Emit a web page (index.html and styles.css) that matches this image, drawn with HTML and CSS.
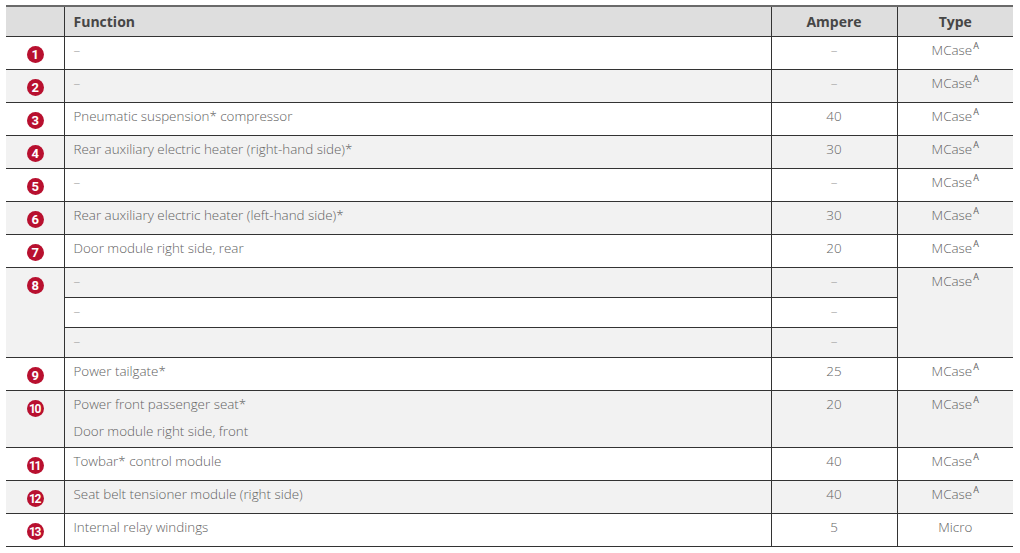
FILE: index.html
```html
<!DOCTYPE html>
<html>
<head>
<meta charset="utf-8">
<link rel="stylesheet" href="styles.css">
</head>
<body>
<table class="fuse">
  <colgroup>
    <col class="c-num"><col class="c-fn"><col class="c-amp"><col class="c-type">
  </colgroup>
  <thead>
    <tr><th></th><th class="l">Function</th><th>Ampere</th><th>Type</th></tr>
  </thead>
  <tbody>
    <tr class="w"><td class="num"><span class="b">1</span></td><td class="fn dash">–</td><td class="amp dash">–</td><td class="type">MCase<sup>A</sup></td></tr>
    <tr class="g"><td class="num"><span class="b">2</span></td><td class="fn dash">–</td><td class="amp dash">–</td><td class="type">MCase<sup>A</sup></td></tr>
    <tr class="w"><td class="num"><span class="b">3</span></td><td class="fn">Pneumatic suspension* compressor</td><td class="amp">40</td><td class="type">MCase<sup>A</sup></td></tr>
    <tr class="g"><td class="num"><span class="b">4</span></td><td class="fn">Rear auxiliary electric heater (right-hand side)*</td><td class="amp">30</td><td class="type">MCase<sup>A</sup></td></tr>
    <tr class="w"><td class="num"><span class="b">5</span></td><td class="fn dash">–</td><td class="amp dash">–</td><td class="type">MCase<sup>A</sup></td></tr>
    <tr class="g"><td class="num"><span class="b">6</span></td><td class="fn">Rear auxiliary electric heater (left-hand side)*</td><td class="amp">30</td><td class="type">MCase<sup>A</sup></td></tr>
    <tr class="w"><td class="num"><span class="b">7</span></td><td class="fn">Door module right side, rear</td><td class="amp">20</td><td class="type">MCase<sup>A</sup></td></tr>
    <tr class="g sub"><td class="num g" rowspan="3"><span class="b">8</span></td><td class="fn dash">–</td><td class="amp dash">–</td><td class="type g" rowspan="3">MCase<sup>A</sup></td></tr>
    <tr class="w sub"><td class="fn dash">–</td><td class="amp dash">–</td></tr>
    <tr class="g sub"><td class="fn dash">–</td><td class="amp dash">–</td></tr>
    <tr class="w"><td class="num"><span class="b">9</span></td><td class="fn">Power tailgate*</td><td class="amp">25</td><td class="type">MCase<sup>A</sup></td></tr>
    <tr class="g tall"><td class="num"><span class="b two">10</span></td><td class="fn"><div>Power front passenger seat*</div><div class="second">Door module right side, front</div></td><td class="amp">20</td><td class="type">MCase<sup>A</sup></td></tr>
    <tr class="w"><td class="num"><span class="b two">11</span></td><td class="fn">Towbar* control module</td><td class="amp">40</td><td class="type">MCase<sup>A</sup></td></tr>
    <tr class="g"><td class="num"><span class="b two">12</span></td><td class="fn">Seat belt tensioner module (right side)</td><td class="amp">40</td><td class="type">MCase<sup>A</sup></td></tr>
    <tr class="w"><td class="num"><span class="b two">13</span></td><td class="fn">Internal relay windings</td><td class="amp">5</td><td class="type">Micro</td></tr>
  </tbody>
</table>
</body>
</html>
```

FILE: styles.css
```css
html, body {
  margin: 0;
  padding: 0;
  background: #ffffff;
}
body {
  padding: 5px 7px 0 6px;
  font-family: "Open Sans", "Lato", sans-serif;
}
.fuse {
  border-collapse: collapse;
  width: 1007px;
  table-layout: fixed;
  font-size: 13.4px;
  font-weight: 300;
  color: #626262;
}
.c-num { width: 58px; }
.c-fn { width: 707px; }
.c-amp { width: 126px; }
.c-type { width: 116px; }

.fuse thead th {
  background: #dedede;
  border-top: 2px solid #6a6a6a;
  border-bottom: 1px solid #333;
  height: 30px;
  padding: 0 9px;
  box-sizing: border-box;
  font-weight: 700;
  color: #464646;
  font-size: 14px;
  text-align: center;
  vertical-align: middle;
}
.fuse thead th.l { text-align: left; }
.fuse thead th + th,
.fuse td + td { border-left: 1px solid #333; }
.fuse td.type[rowspan],
.fuse tr.sub td.fn { border-left: 1px solid #333; }

.fuse td {
  height: 33px;
  box-sizing: border-box;
  padding: 4px 9px 0;
  line-height: 18px;
  vertical-align: top;
  border-bottom: 1px solid #333;
}
.fuse tr.sub td { height: 30px; }
.fuse tr.sub td[rowspan] { height: auto; }
.fuse tr.tall td { height: 57px; }
.fuse .second { margin-top: 9px; }

tr.w td { background: #ffffff; }
tr.g td { background: #f2f2f2; }
.fuse td.g { background: #f2f2f2; }

.fuse td.amp, .fuse td.type { text-align: center; }
.fuse td.dash { color: #a0a0a0; }
.fuse td.num { text-align: center; padding: 8px 0 0; }

.fuse sup {
  font-size: 9px;
  font-weight: 400;
  line-height: 0;
  vertical-align: 6px;
  margin-left: 1px;
}

.b {
  display: inline-flex;
  align-items: center;
  justify-content: center;
  width: 17px;
  height: 17px;
  border-radius: 50%;
  background: #b8102f;
  color: #fff;
  font-family: "Roboto", sans-serif;
  font-weight: 700;
  font-size: 13px;
  line-height: 1;
  margin-left: 1px;
}
.b.two {
  font-size: 12px;
  letter-spacing: -1.5px;
  text-indent: -1.5px;
}
```
